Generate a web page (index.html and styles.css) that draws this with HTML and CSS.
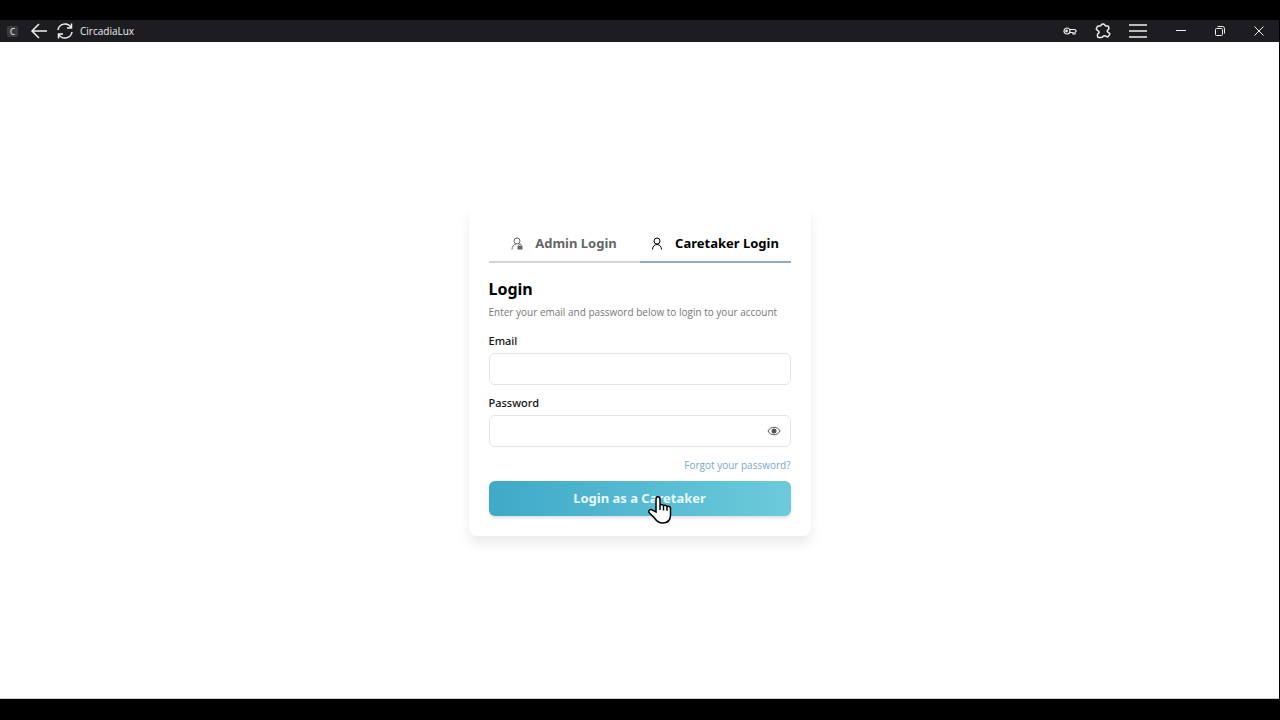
FILE: index.html
```html
<!DOCTYPE html>
<html lang="en">
<head>
    <meta charset="UTF-8">
    <meta name="viewport" content="width=device-width, initial-scale=1.0">
    <title>CircadiaLux</title>
    <link rel="stylesheet" href="styles.css">
</head>
<body>

<div class="window">
    <!-- Title bar -->
    <header class="titlebar">
        <span class="app-icon">C</span>
        <button type="button" class="bar-btn back" aria-label="Back">
            <svg width="18" height="18" viewBox="0 0 18 18"><path d="M17 9H2M9 2L2 9l7 7"/></svg>
        </button>
        <button type="button" class="bar-btn reload" aria-label="Reload">
            <svg width="18" height="18" viewBox="0 0 18 18"><path d="M2 8a7 7 0 0 1 13-2.500M15.500 1.500v4.500H11M16 10a7 7 0 0 1-13 2.500M2.500 16.500V12H7"/></svg>
        </button>
        <span class="app-name">CircadiaLux</span>
        <div class="tools">
            <button type="button" class="bar-btn" aria-label="Passwords">
                <svg class="key" width="14" height="10" viewBox="0 0 14 10"><circle cx="4" cy="5" r="3"/><circle cx="3.5" cy="5" r="0.8"/><path d="M6.500 3.500H12l1.200 1.500-1.200 1.500V8h-2V6.500H6.500"/></svg>
            </button>
            <button type="button" class="bar-btn" aria-label="Extensions">
                <svg width="16" height="16" viewBox="0 0 16 16"><path d="M3.500 3H5c0.800 0 0.800-0.500 1.200-1.100 0.800-1.200 2.800-1.200 3.600 0C10.200 2.500 10.200 3 11 3h1.500c0.800 0 1.300 0.500 1.300 1.300v1.500c0 0.800-1.600 0.800-1.600 2.200 0 1.500 2.600 1.800 2.600 3 0 0.500-1.500 3-2.300 3-1 0-1.500-1.300-3-1.300S7.500 14.500 6.500 14.500H3.800c-0.800 0-1.300-0.500-1.300-1.300v-1.700c0-0.800 1.600-1.200 1.600-2.300C4.100 7.500 1.300 7.300 1.300 6c0-0.900 1.200-3 2.200-3z"/></svg>
            </button>
            <button type="button" class="bar-btn" aria-label="Menu">
                <svg width="18" height="16" viewBox="0 0 18 16"><path d="M0 2h18M0 8h18M0 14h18"/></svg>
            </button>
        </div>
        <div class="controls">
            <button type="button" class="bar-btn" aria-label="Minimize">
                <svg width="10" height="10" viewBox="0 0 10 10"><path d="M0 4.500h10"/></svg>
            </button>
            <button type="button" class="bar-btn" aria-label="Restore">
                <svg width="10" height="10" viewBox="0 0 10 10"><rect x="0.5" y="2.5" width="7" height="7" rx="1"/><path d="M2.500 0.500h5a2 2 0 0 1 2 2v5"/></svg>
            </button>
            <button type="button" class="bar-btn" aria-label="Close">
                <svg width="10" height="10" viewBox="0 0 10 10"><path d="M0.500 0.500l9 9M9.500 0.500l-9 9"/></svg>
            </button>
        </div>
    </header>

    <!-- Login card -->
    <main class="page">
        <form class="card">
            <div class="tabs" role="tablist">
                <button type="button" class="tab" role="tab" aria-selected="false">
                    <svg width="12" height="14" viewBox="0 0 12 14">
                        <circle cx="6" cy="5" r="3"/>
                        <path d="M1 13.500c0-3 1.500-4.500 4-5.500"/>
                        <path d="M7.800 10V9c0-1.200 2.400-1.200 2.400 0v1"/>
                        <rect class="solid" x="6.500" y="10" width="5" height="3.500"/>
                    </svg>
                    Admin Login
                </button>
                <button type="button" class="tab active" role="tab" aria-selected="true">
                    <svg width="12" height="14" viewBox="0 0 12 14">
                        <circle cx="6" cy="5" r="3"/>
                        <path d="M1.500 13.500c0-3 2-5 4.500-5s4.500 2 4.500 5"/>
                    </svg>
                    Caretaker Login
                </button>
            </div>

            <h1>Login</h1>
            <p class="description">Enter your email and password below to login to your account</p>

            <label for="email">Email</label>
            <input type="email" id="email">

            <label for="password">Password</label>
            <div class="password-field">
                <input type="password" id="password">
                <button type="button" class="show-password" aria-label="Show password">
                    <svg width="14" height="10" viewBox="0 0 14 10"><path d="M1 5c2.500-5 9.500-5 12 0-2.500 5-9.500 5-12 0z"/><circle class="solid" cx="7" cy="5" r="2.500"/></svg>
                </button>
            </div>

            <a href="#" class="forgot">Forgot your password?</a>
            <div class="submit-row">
                <button type="submit" class="submit">Login as a Caretaker</button>
                <!-- Hand pointer -->
                <svg class="pointer" width="24" height="30" viewBox="0 0 24 30"><path d="M8 17V4c0-3 4-3 4 0v7c0-2 3.500-2 3.500 0.500 0-2 3.500-1.500 3.500 0.800 0-1.800 3.500-1.500 3.500 1V20c0 5-3 8-8 8-4 0-6-2-8-5l-5-5c-2-2.500 1-4.500 3-2.800L8 17zM12 11v4M15.500 11.500v4M19 12.300v3.500"/></svg>
            </div>
        </form>
    </main>
</div>

</body>
</html>
```
FILE: styles.css
```css
* {
    box-sizing: border-box;
}
body {
    font-family: "Noto Sans", "Open Sans", sans-serif;
    margin: 0;
    background: #000;
    color: #111;
}
button {
    font-family: inherit;
    border: none;
    background: none;
    padding: 0;
    cursor: pointer;
}
svg {
    display: block;
    fill: none;
    stroke: currentColor;
}
.window {
    display: flex;
    flex-direction: column;
    min-height: 100vh;
    padding: 20px 1px 21px 0;
}
.titlebar {
    display: flex;
    align-items: center;
    height: 22px;
    padding: 0 15px 0 7px;
    background: #1d1d21;
    color: #f0f0f0;
}
.app-icon {
    width: 11px;
    height: 11px;
    border-radius: 2px;
    background: #3b3b3e;
    font-size: 8px;
    line-height: 11px;
    text-align: center;
}
.bar-btn {
    color: inherit;
}
.bar-btn svg {
    stroke-width: 1.5;
}
.back {
    margin-left: 12px;
}
.reload {
    margin: 0 6px 0 8px;
}
.app-name {
    font-family: "Open Sans", sans-serif;
    font-size: 10px;
}
.tools {
    display: flex;
    align-items: center;
    gap: 18px;
    margin-left: auto;
}
.bar-btn .key {
    stroke-width: 1.2;
}
.controls {
    display: flex;
    gap: 29px;
    margin-left: 29px;
}
.controls svg {
    stroke-width: 1;
}
.page {
    display: flex;
    flex: 1;
    align-items: center;
    justify-content: center;
    background: #fff;
    border-bottom: 1px solid #ccc;
}
.card {
    display: flex;
    flex-direction: column;
    width: 342px;
    padding: 20px;
    border-radius: 8px;
    background: #fff;
    box-shadow: 0 8px 12px rgba(0, 0, 0, 0.08);
}
.tabs {
    display: flex;
    margin-bottom: 14px;
}
.tab {
    display: flex;
    flex: 1;
    align-items: center;
    justify-content: center;
    gap: 12px;
    height: 38px;
    border-bottom: 2px solid #d4d4d4;
    color: #666;
    font-size: 13px;
    font-weight: 700;
    white-space: nowrap;
}
.tab.active {
    border-color: #8fafc0;
    color: #000;
}
.solid {
    fill: currentColor;
    stroke: none;
}
h1 {
    margin: 0 0 2px;
    color: #000;
    font-size: 16px;
    line-height: 24px;
}
.description {
    margin: 0 0 12px;
    color: #777;
    font-family: "Open Sans", sans-serif;
    font-size: 10px;
    line-height: 18px;
}
label {
    margin-bottom: 4px;
    font-size: 11px;
    font-weight: 500;
    line-height: 16px;
}
input {
    width: 100%;
    height: 32px;
    margin-bottom: 10px;
    padding: 0 10px;
    border: 1px solid #e4e4e4;
    border-radius: 6px;
    background: #fff;
    font-family: inherit;
    font-size: 11px;
}
.password-field {
    position: relative;
}
.password-field input {
    display: block;
    padding-right: 34px;
}
.show-password {
    position: absolute;
    top: 11px;
    right: 10px;
    color: #555;
}
.forgot {
    align-self: flex-end;
    margin-bottom: 8px;
    color: #7aaac4;
    font-family: "Open Sans", sans-serif;
    font-size: 10px;
    line-height: 16px;
    text-decoration: none;
}
.submit-row {
    position: relative;
}
.submit {
    width: 100%;
    height: 35px;
    border-radius: 6px;
    background: linear-gradient(to right, #3fa9c8, #6ccbdb);
    box-shadow: 0 2px 3px rgba(0, 0, 0, 0.12);
    color: #e8f8fc;
    font-size: 13px;
    font-weight: 700;
}
.pointer {
    position: absolute;
    top: 14px;
    left: 159px;
    fill: #fff;
    stroke: #000;
    stroke-width: 1.5;
    pointer-events: none;
}
```
